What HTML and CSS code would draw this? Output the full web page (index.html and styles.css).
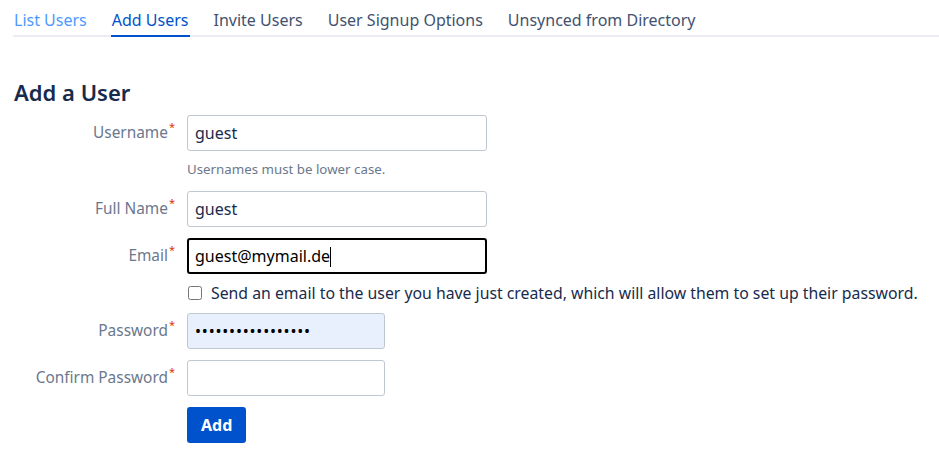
FILE: index.html
```html
<!DOCTYPE html>
<html lang="en">
<head>
    <meta charset="UTF-8">
    <meta name="viewport" content="width=device-width, initial-scale=1.0">
    <title>Add Users</title>
    <link rel="stylesheet" href="styles.css">
</head>
<body>
    <nav class="tabs">
        <a class="tab tab-visited" href="#">List Users</a>
        <a class="tab active" href="#">Add Users</a>
        <a class="tab" href="#">Invite Users</a>
        <a class="tab" href="#">User Signup Options</a>
        <a class="tab" href="#">Unsynced from Directory</a>
    </nav>

    <div class="page">
        <h1>Add a User</h1>
        <form class="user-form">
            <div class="field">
                <label for="username">Username<span class="req">*</span></label>
                <div class="control">
                    <input id="username" class="text-input" type="text" value="guest">
                    <p class="hint">Usernames must be lower case.</p>
                </div>
            </div>
            <div class="field">
                <label for="fullname">Full Name<span class="req">*</span></label>
                <div class="control">
                    <input id="fullname" class="text-input" type="text" value="guest">
                </div>
            </div>
            <div class="field">
                <label for="email">Email<span class="req">*</span></label>
                <div class="control">
                    <div class="text-input focused">guest@mymail.de<span class="caret"></span></div>
                </div>
            </div>
            <div class="field check-row">
                <span></span>
                <label class="check">
                    <input type="checkbox">
                    <span>Send an email to the user you have just created, which will allow them to set up their password.</span>
                </label>
            </div>
            <div class="field">
                <label for="password">Password<span class="req">*</span></label>
                <div class="control">
                    <input id="password" class="text-input short autofill" type="password" value="guestpassword1234">
                </div>
            </div>
            <div class="field">
                <label for="confirm">Confirm Password<span class="req">*</span></label>
                <div class="control">
                    <input id="confirm" class="text-input short" type="password">
                </div>
            </div>
            <div class="field">
                <span></span>
                <div class="control">
                    <button class="btn" type="button">Add</button>
                </div>
            </div>
        </form>
    </div>
</body>
</html>
```

FILE: styles.css
```css
* {
    margin: 0;
    padding: 0;
    box-sizing: border-box;
    font-family: 'Noto Sans', sans-serif;
}

body {
    background: #ffffff;
    color: #172b4d;
    font-size: 15.8px;
}

.tabs {
    display: flex;
    gap: 23px;
    margin-left: 13px;
    padding-top: 8px;
    border-bottom: 2px solid #ebecf0;
}

.tab {
    padding: 2px 1px 5px;
    margin-bottom: -2px;
    line-height: 20px;
    font-size: 16px;
    color: #42526e;
    text-decoration: none;
    border-bottom: 2px solid transparent;
}

.tab-visited {
    color: #4c9aff;
}

.tab.active {
    color: #0052cc;
    border-bottom-color: #0052cc;
}

.page {
    padding-left: 14px;
}

h1 {
    margin-top: 41px;
    font-size: 22px;
    line-height: 28px;
    font-weight: 600;
    color: #172b4d;
}

.user-form {
    margin-top: 9px;
}

.field {
    display: grid;
    grid-template-columns: 161px 1fr;
    column-gap: 12px;
    margin-bottom: 11px;
}

.field > label {
    text-align: right;
    color: #6b778c;
    font-size: 15.4px;
    line-height: 36px;
}

.req {
    color: #de350b;
    font-size: 11px;
    vertical-align: top;
    position: relative;
    top: -6px;
    margin-left: 1px;
}

.text-input {
    display: block;
    width: 300px;
    height: 36px;
    padding: 0 7px;
    border: 1px solid #c1c7d0;
    border-radius: 3px;
    font-size: 16px;
    color: #172b4d;
    background: #ffffff;
    line-height: 34px;
}

.text-input.short {
    width: 198px;
}

.text-input.autofill {
    background: #e8f0fe;
    color: #000000;
    letter-spacing: 0.8px;
}

.focused {
    border: 2px solid #000000;
    padding: 0 6px;
    line-height: 32px;
    color: #000000;
}

.caret {
    display: inline-block;
    width: 1px;
    height: 20px;
    background: #000000;
    vertical-align: -5px;
}

.hint {
    margin-top: 8px;
    margin-bottom: 1px;
    font-size: 13.3px;
    line-height: 20px;
    color: #6b778c;
}

.check-row {
    margin-top: -2px;
    margin-bottom: 10px;
}

.field > .check {
    display: flex;
    align-items: center;
    gap: 9px;
    font-size: 15.8px;
    line-height: 20px;
    text-align: left;
    color: #172b4d;
}

.check input {
    width: 14px;
    height: 14px;
    margin-left: 1px;
}

.btn {
    background: #0052cc;
    color: white;
    border: none;
    height: 36px;
    padding: 0 14px;
    border-radius: 3px;
    font-size: 16px;
    font-weight: 700;
    cursor: pointer;
}
```
